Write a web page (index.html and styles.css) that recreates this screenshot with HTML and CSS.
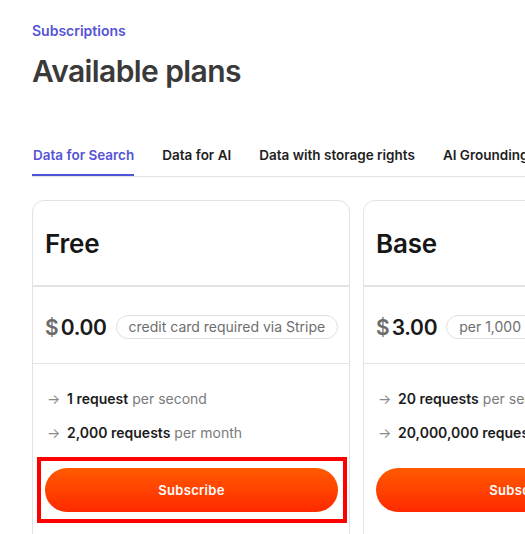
FILE: index.html
```html
<!DOCTYPE html>
<html lang="en">
<head>
<meta charset="utf-8">
<title>Available plans</title>
<link rel="stylesheet" href="styles.css">
</head>
<body>
<main class="page">
  <p class="eyebrow">Subscriptions</p>
  <h1 class="title">Available plans</h1>
  <nav class="tabs">
    <a class="tab active">Data for Search</a>
    <a class="tab">Data for AI</a>
    <a class="tab">Data with storage rights</a>
    <a class="tab">AI Grounding</a>
  </nav>
  <section class="plans">
    <article class="card">
      <header class="card-head"><h2 class="plan-name">Free</h2></header>
      <div class="card-price">
        <span class="cur">$</span><span class="amount">0.00</span>
        <span class="pill">credit card required via Stripe</span>
      </div>
      <ul class="features">
        <li><span class="arrow">→</span><b>1 request</b> per second</li>
        <li><span class="arrow">→</span><b>2,000 requests</b> per month</li>
      </ul>
      <div class="highlight"><button class="btn">Subscribe</button></div>
    </article>
    <article class="card">
      <header class="card-head"><h2 class="plan-name">Base</h2></header>
      <div class="card-price">
        <span class="cur">$</span><span class="amount">3.00</span>
        <span class="pill">per 1,000 requests</span>
      </div>
      <ul class="features">
        <li><span class="arrow">→</span><b>20 requests</b> per second</li>
        <li><span class="arrow">→</span><b>20,000,000 requests</b> per month</li>
      </ul>
      <div class="plain"><button class="btn">Subscribe</button></div>
    </article>
  </section>
</main>
</body>
</html>
```
FILE: styles.css
```css
* { box-sizing: border-box; }
html, body { margin: 0; padding: 0; background: #fff; overflow: hidden; }
body { font-family: Inter, "Noto Sans", sans-serif; color: #1a1a1a; width: 525px; height: 534px; }
.page { padding: 21px 0 0 32px; }
.eyebrow { margin: 0; font-size: 14px; line-height: 20px; font-weight: 600; color: #5553d6; }
.title { margin: 10px 0 0; font-size: 30px; line-height: 40px; font-weight: 600; color: #3a3a3a; letter-spacing: -0.6px; }
.tabs { display: flex; gap: 27px; margin-top: 50px; border-bottom: 1px solid #e4e4e4; white-space: nowrap; }
.tab { font-size: 13.5px; font-weight: 600; line-height: 18px; padding: 5px 0 12px 1px; color: #1e1e1e; }
.tab.active { color: #5553d6; box-shadow: inset 0 -2px 0 #4b55d6; }
.plans { display: flex; gap: 13px; margin-top: 23px; }
.card { flex: 0 0 318px; width: 318px; min-width: 0; overflow: hidden; border: 1px solid #e2e2e2; border-radius: 12px; height: 360px; }
.card-head { height: 86px; border-bottom: 2px solid #e4e4e4; padding: 27px 12px 0; }
.plan-name { margin: 0; font-size: 26px; line-height: 32px; font-weight: 600; color: #161616; letter-spacing: -0.2px; }
.card-price { height: 77px; border-bottom: 1px solid #e4e4e4; display: flex; align-items: center; padding: 4px 12px 0 12px; white-space: nowrap; }
.cur { font-size: 21px; font-weight: 600; color: #6b6b6b; margin-right: 2px; }
.amount { font-size: 21px; font-weight: 600; color: #1a1a1a; letter-spacing: -0.3px; }
.pill { margin-left: 9px; border: 1px solid #e0e0e0; border-radius: 12px; padding: 1px 12px 2px; font-size: 14px; line-height: 19px; color: #6e6e6e; }
.features { list-style: none; margin: 0; padding: 25px 14px 0; white-space: nowrap; }
.features li { font-size: 14px; line-height: 20px; color: #7a7a7a; margin-bottom: 14px; display: flex; align-items: center; }
.features li b { color: #1c1c1c; font-weight: 600; margin-right: 4px; }
.arrow { color: #8a8a8a; font-size: 14px; width: 20px; }
.highlight { margin: 0 2px 0 4px; border: 4px solid #ff0000; padding: 7px 5px 7px 4px; }
.plain { margin: 0 2px 0 4px; border: 4px solid transparent; padding: 7px 5px 7px 4px; }
.btn { display: block; width: 100%; height: 44px; border: 0; border-radius: 22px; background: linear-gradient(#ff5a00, #ff2a00); color: #fff; font-family: Inter, sans-serif; font-size: 13px; font-weight: 600; letter-spacing: 0.3px; }
```
